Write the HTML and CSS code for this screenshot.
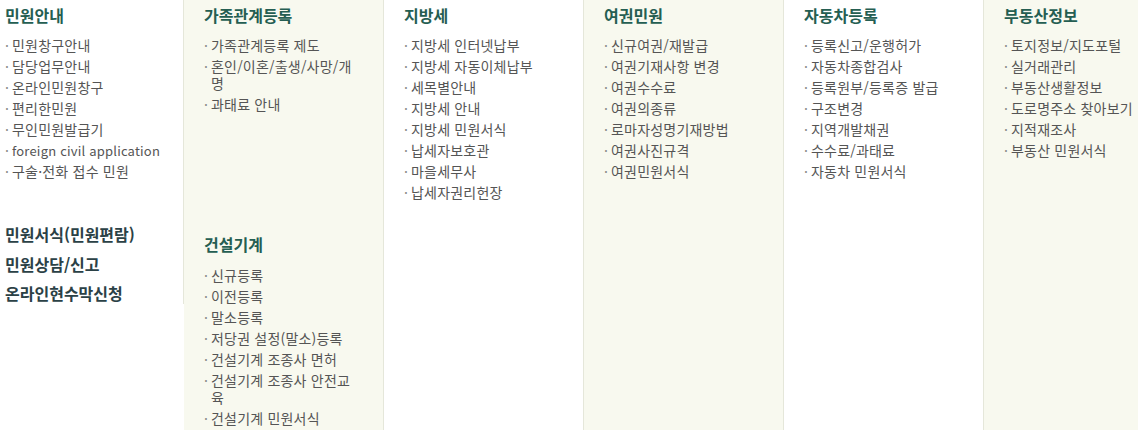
FILE: index.html
```html
<!DOCTYPE html>
<html lang="ko">
<head>
<meta charset="utf-8">
<title>민원안내 메뉴</title>
<link rel="stylesheet" href="styles.css">
</head>
<body>
<nav class="menu">
  <div class="col col-first">
    <h2 class="title">민원안내</h2>
    <ul class="list">
      <li>민원창구안내</li>
      <li>담당업무안내</li>
      <li>온라인민원창구</li>
      <li>편리한민원</li>
      <li>무인민원발급기</li>
      <li class="latin"><span class="latin-text">foreign civil application</span></li>
      <li>구술·전화 접수 민원</li>
    </ul>
    <ul class="biglinks">
      <li>민원서식(민원편람)</li>
      <li>민원상담/신고</li>
      <li>온라인현수막신청</li>
    </ul>
  </div>
  <div class="col col-green">
    <div class="group group-top">
      <h2 class="title">가족관계등록</h2>
      <ul class="list">
        <li>가족관계등록 제도</li>
        <li>혼인/이혼/출생/사망/개명</li>
        <li>과태료 안내</li>
      </ul>
    </div>
    <div class="group group-bottom">
      <h2 class="title">건설기계</h2>
      <ul class="list">
        <li>신규등록</li>
        <li>이전등록</li>
        <li>말소등록</li>
        <li>저당권 설정(말소)등록</li>
        <li>건설기계 조종사 면허</li>
        <li>건설기계 조종사 안전교육</li>
        <li>건설기계 민원서식</li>
      </ul>
    </div>
  </div>
  <div class="col">
    <h2 class="title">지방세</h2>
    <ul class="list">
      <li>지방세 인터넷납부</li>
      <li>지방세 자동이체납부</li>
      <li>세목별안내</li>
      <li>지방세 안내</li>
      <li>지방세 민원서식</li>
      <li>납세자보호관</li>
      <li>마을세무사</li>
      <li>납세자권리헌장</li>
    </ul>
  </div>
  <div class="col col-green">
    <h2 class="title">여권민원</h2>
    <ul class="list">
      <li>신규여권/재발급</li>
      <li>여권기재사항 변경</li>
      <li>여권수수료</li>
      <li>여권의종류</li>
      <li>로마자성명기재방법</li>
      <li>여권사진규격</li>
      <li>여권민원서식</li>
    </ul>
  </div>
  <div class="col">
    <h2 class="title">자동차등록</h2>
    <ul class="list">
      <li>등록신고/운행허가</li>
      <li>자동차종합검사</li>
      <li>등록원부/등록증 발급</li>
      <li>구조변경</li>
      <li>지역개발채권</li>
      <li>수수료/과태료</li>
      <li>자동차 민원서식</li>
    </ul>
  </div>
  <div class="col col-green col-last">
    <h2 class="title">부동산정보</h2>
    <ul class="list">
      <li>토지정보/지도포털</li>
      <li>실거래관리</li>
      <li>부동산생활정보</li>
      <li>도로명주소 찾아보기</li>
      <li>지적재조사</li>
      <li>부동산 민원서식</li>
    </ul>
  </div>
</nav>
</body>
</html>
```
FILE: styles.css
```css
html, body {
  margin: 0;
  padding: 0;
  background: #ffffff;
}

body {
  font-family: "Noto Sans CJK KR", "Noto Sans", sans-serif;
  color: #555555;
  width: 1138px;
  height: 430px;
  overflow: hidden;
}

.menu {
  display: flex;
  align-items: stretch;
  height: 430px;
}

.col {
  box-sizing: border-box;
  width: 200px;
  flex: 0 0 auto;
  padding: 0 26px 0 20px;
  border-right: 1px solid #e5e7da;
}

.col-first {
  width: 184px;
  height: 304px;
  padding: 0 0 0 5px;
  align-self: flex-start;
}

.col-green {
  background: #f8f9ef;
}

.col-last {
  flex: 1 1 auto;
  padding-right: 0;
  border-right: 0;
}

.title {
  margin: 5px 0 0;
  font-size: 16px;
  line-height: 20px;
  font-weight: 700;
  color: #255e52;
}

.list {
  list-style: none;
  margin: 10px 0 0;
  padding: 0;
}

.list li {
  font-size: 14px;
  letter-spacing: 0.2px;
  line-height: 17px;
  padding: 2px 0;
  padding-left: 7px;
  text-indent: -7px;
  color: #555555;
}

.list li .latin-text {
  font-size: 13px;
}

.list li::before {
  content: "·";
  display: inline-block;
  width: 7px;
  text-indent: 0;
  letter-spacing: 0;
  color: #888888;
}

.group-top {
  height: 224px;
}

.group-bottom .list {
  margin-top: 11px;
}

.biglinks {
  list-style: none;
  margin: 37px 0 0;
  padding: 0;
}

.biglinks li {
  font-size: 16px;
  font-weight: 700;
  line-height: 20px;
  padding: 5px 0 4.5px;
  color: #2b4146;
}
```
